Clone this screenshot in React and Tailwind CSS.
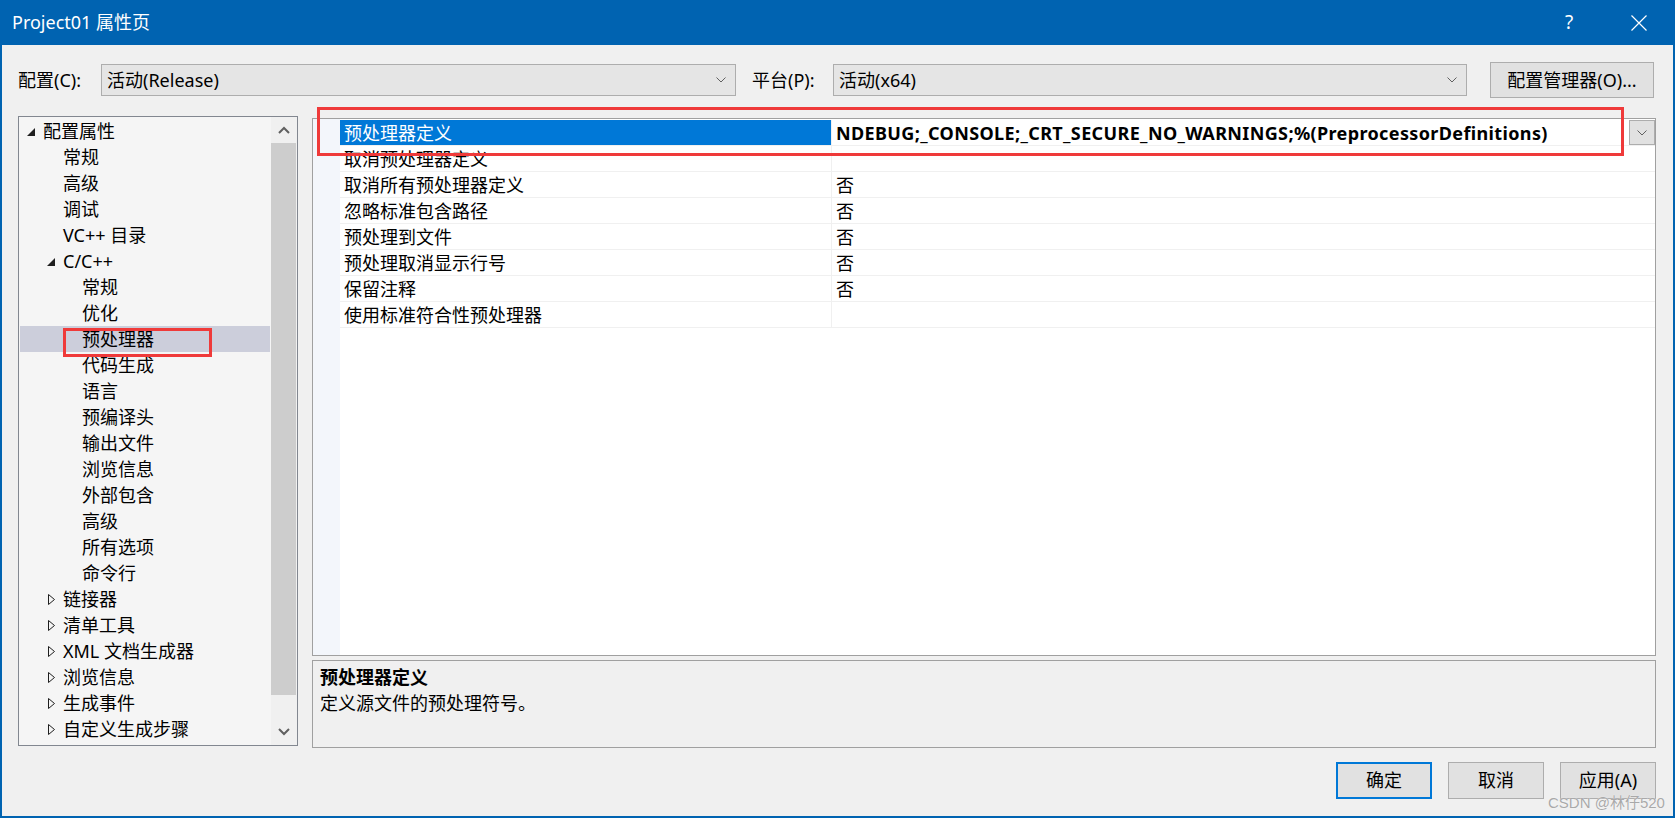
import React from "react";

const Chevron = ({ className = "" }) => (
  <svg width="10" height="6" viewBox="0 0 10 6" className={className}>
    <path d="M0.5 0.5 L5 5 L9.5 0.5" stroke="#606060" strokeWidth="1" fill="none" />
  </svg>
);

const ExpandedTri = () => (
  <svg width="8" height="8" viewBox="0 0 8 8">
    <path d="M8 0 L8 8 L0 8 Z" fill="#1e1e1e" />
  </svg>
);

const CollapsedTri = () => (
  <svg width="7" height="11" viewBox="0 0 7 11">
    <path d="M0.5 0.5 L6.5 5.5 L0.5 10.5 Z" stroke="#1e1e1e" strokeWidth="1" fill="none" />
  </svg>
);

const tree = [
  { t: "配置属性", lvl: 0, tri: "exp" },
  { t: "常规", lvl: 1 },
  { t: "高级", lvl: 1 },
  { t: "调试", lvl: 1 },
  { t: "VC++ 目录", lvl: 1 },
  { t: "C/C++", lvl: 1, tri: "exp" },
  { t: "常规", lvl: 2 },
  { t: "优化", lvl: 2 },
  { t: "预处理器", lvl: 2, sel: true },
  { t: "代码生成", lvl: 2 },
  { t: "语言", lvl: 2 },
  { t: "预编译头", lvl: 2 },
  { t: "输出文件", lvl: 2 },
  { t: "浏览信息", lvl: 2 },
  { t: "外部包含", lvl: 2 },
  { t: "高级", lvl: 2 },
  { t: "所有选项", lvl: 2 },
  { t: "命令行", lvl: 2 },
  { t: "链接器", lvl: 1, tri: "col" },
  { t: "清单工具", lvl: 1, tri: "col" },
  { t: "XML 文档生成器", lvl: 1, tri: "col" },
  { t: "浏览信息", lvl: 1, tri: "col" },
  { t: "生成事件", lvl: 1, tri: "col" },
  { t: "自定义生成步骤", lvl: 1, tri: "col" },
];

const props = [
  { n: "预处理器定义", v: "NDEBUG;_CONSOLE;_CRT_SECURE_NO_WARNINGS;%(PreprocessorDefinitions)", sel: true },
  { n: "取消预处理器定义", v: "" },
  { n: "取消所有预处理器定义", v: "否" },
  { n: "忽略标准包含路径", v: "否" },
  { n: "预处理到文件", v: "否" },
  { n: "预处理取消显示行号", v: "否" },
  { n: "保留注释", v: "否" },
  { n: "使用标准符合性预处理器", v: "" },
];

function TreeRow({ item }) {
  let pad = "";
  if (item.lvl === 0) pad = "pl-[7px]";
  else if (item.lvl === 1 && item.tri) pad = "pl-[27px]";
  else if (item.lvl === 1) pad = "pl-[43px]";
  else pad = "pl-[62px]";
  return (
    <div className={`h-[26px] flex items-center whitespace-nowrap ${pad} ${item.sel ? "bg-[#CCCEDB]" : ""}`}>
      {item.tri && (
        <div className={`${item.lvl === 0 ? "w-[16px]" : "w-[16px]"} flex items-center`}>
          {item.tri === "exp" ? (
            <div className="mt-[1px]"><ExpandedTri /></div>
          ) : (
            <div className="ml-[1px]"><CollapsedTri /></div>
          )}
        </div>
      )}
      <span>{item.t}</span>
    </div>
  );
}

export default function App() {
  return (
    <div className="relative w-[1675px] h-[818px] bg-[#F0F0F0] border-x-2 border-b-2 border-[#0063B1] flex flex-col overflow-hidden text-[18px] text-black font-['Noto_Sans','Noto_Sans_CJK_SC',sans-serif]">
      {/* Title bar */}
      <div className="h-[45px] shrink-0 bg-[#0063B1] flex items-center pl-[10px] pr-[11px] text-white">
        <div className="flex-1">Project01 属性页</div>
        <div className="flex items-center gap-[24px]">
          <div className="w-[46px] text-center text-[19px]">?</div>
          <div className="w-[46px] flex justify-center">
            <svg width="16" height="16" viewBox="0 0 16 16">
              <path d="M0.5 0.5 L15.5 15.5 M15.5 0.5 L0.5 15.5" stroke="white" strokeWidth="1.2" fill="none" />
            </svg>
          </div>
        </div>
      </div>

      <div className="flex flex-col pl-[16px]">
        {/* Config row */}
        <div className="mt-[17px] h-[36px] flex items-center">
          <div className="w-[83px] whitespace-nowrap">配置(C):</div>
          <div className="w-[635px] h-[32px] bg-[#E5E5E5] border border-[#ADADAD] flex items-center justify-between pl-[5px] pr-[9px]">
            <span>活动(Release)</span>
            <Chevron />
          </div>
          <div className="ml-[16px] w-[81px] whitespace-nowrap">平台(P):</div>
          <div className="w-[634px] h-[32px] bg-[#E5E5E5] border border-[#ADADAD] flex items-center justify-between pl-[5px] pr-[9px]">
            <span>活动(x64)</span>
            <Chevron />
          </div>
          <div className="ml-[23px] w-[164px] h-[36px] bg-[#E1E1E1] border border-[#ADADAD] flex items-center justify-center whitespace-nowrap">
            配置管理器(O)...
          </div>
        </div>

        {/* Main */}
        <div className="mt-[18px] flex gap-[14px]">
          {/* Tree */}
          <div className="w-[280px] h-[630px] border border-[#828790] bg-[#F5F5F5] flex">
            <div className="flex-1 p-[1px] flex flex-col overflow-hidden">
              {tree.map((it, i) => (
                <TreeRow key={i} item={it} />
              ))}
            </div>
            <div className="w-[26px] bg-[#F0F0F0] flex flex-col">
              <div className="h-[26px] flex items-center justify-center">
                <svg width="12" height="8" viewBox="0 0 12 8">
                  <path d="M1 7 L6 2 L11 7" stroke="#606060" strokeWidth="2" fill="none" />
                </svg>
              </div>
              <div className="h-[552px] bg-[#CDCDCD] mr-[1px]" />
              <div className="flex-1" />
              <div className="h-[26px] flex items-center justify-center">
                <svg width="12" height="8" viewBox="0 0 12 8">
                  <path d="M1 1 L6 6 L11 1" stroke="#606060" strokeWidth="2" fill="none" />
                </svg>
              </div>
            </div>
          </div>

          {/* Right column */}
          <div className="w-[1344px] pt-[2px] flex flex-col gap-[4px]">
            <div className="h-[538px] border border-[#A0A0A0] bg-white flex">
              <div className="w-[27px] bg-[#F3F6FB]" />
              <div className="flex-1 pt-[1px] flex flex-col">
                {props.map((p, i) => (
                  <div key={i} className="h-[26px] flex border-b border-[#F0F0F0]">
                    <div className={`w-[492px] pl-[4px] pt-[2px] flex items-center border-r border-[#F0F0F0] whitespace-nowrap ${p.sel ? "bg-[#0078D7] text-white" : ""}`}>
                      {p.n}
                    </div>
                    <div className={`flex-1 pl-[4px] flex items-center justify-between whitespace-nowrap ${p.sel ? "font-bold" : ""}`}>
                      <span className={`pt-[2px] ${p.sel ? "tracking-[0.37px]" : ""}`}>{p.v}</span>
                      {p.sel && (
                        <div className="w-[26px] h-[25px] bg-[#E1E1E1] border border-[#ADADAD] flex items-center justify-center">
                          <Chevron />
                        </div>
                      )}
                    </div>
                  </div>
                ))}
              </div>
            </div>
            <div className="h-[88px] border border-[#A0A0A0] bg-[#F0F0F0] pt-[3px] pl-[7px] leading-[26px]">
              <div className="font-bold">预处理器定义</div>
              <div>定义源文件的预处理符号。</div>
            </div>
          </div>
        </div>

        {/* Buttons */}
        <div className="mt-[14px] flex justify-end gap-[16px] mr-[1px] pr-[16px]">
          <div className="w-[96px] h-[37px] bg-[#E1E1E1] border-2 border-[#0078D7] flex items-center justify-center">确定</div>
          <div className="w-[96px] h-[37px] bg-[#E1E1E1] border border-[#ADADAD] flex items-center justify-center">取消</div>
          <div className="w-[96px] h-[37px] bg-[#E1E1E1] border border-[#ADADAD] flex items-center justify-center">应用(A)</div>
        </div>
      </div>

      {/* Annotation overlays */}
      <div className="absolute left-[315px] top-[107px] w-[1307px] h-[49px] border-[3px] border-[#EF3A3A] pointer-events-none" />
      <div className="absolute left-[61px] top-[328px] w-[149px] h-[29px] border-[3px] border-[#EF3A3A] pointer-events-none" />
      <div className="absolute left-[1546px] top-[792px] text-[15px] text-[#A9A9A9] font-['Liberation_Sans','Noto_Sans_CJK_SC',sans-serif] [text-shadow:0_0_1px_#ffffff] whitespace-nowrap">
        CSDN @林仔520
      </div>
    </div>
  );
}
